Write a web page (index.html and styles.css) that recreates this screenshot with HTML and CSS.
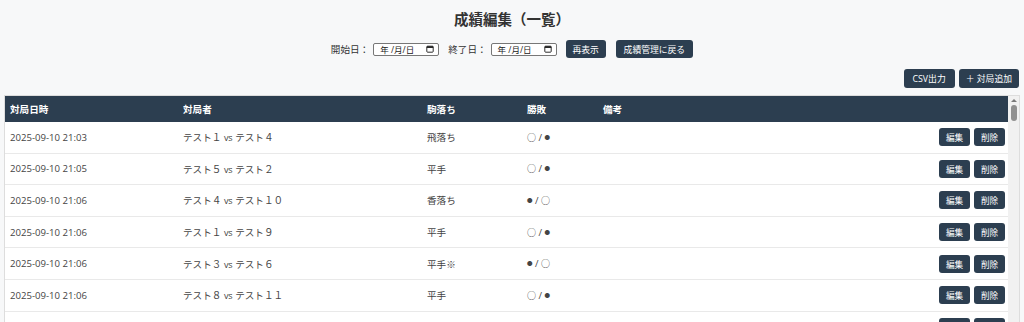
FILE: index.html
```html
<!DOCTYPE html>
<html lang="ja">
<head>
  <meta charset="UTF-8" />
  <meta name="viewport" content="width=device-width, initial-scale=1.0"/>
  <title>成績編集（一覧）</title>
  <link rel="stylesheet" href="styles.css">
</head>
<body>
  <h1 class="title">成績編集（一覧）</h1>

  <div class="filters">
    <label>開始日：</label>
    <span class="date-box"><span>年 /月/日</span><svg class="cal" viewBox="0 0 10 10"><rect x="1" y="1.5" width="8" height="7.5" rx="1" fill="none" stroke="#222" stroke-width="1.2"/><rect x="1" y="1.5" width="8" height="2.2" fill="#222"/></svg></span>
    <label class="gap-left">終了日：</label>
    <span class="date-box"><span>年 /月/日</span><svg class="cal" viewBox="0 0 10 10"><rect x="1" y="1.5" width="8" height="7.5" rx="1" fill="none" stroke="#222" stroke-width="1.2"/><rect x="1" y="1.5" width="8" height="2.2" fill="#222"/></svg></span>
    <button class="btn btn-reload">再表示</button>
    <button class="btn">成績管理に戻る</button>
  </div>

  <div class="toolbar">
    <button class="btn btn-tool btn-csv">CSV出力</button>
    <button class="btn btn-tool">＋ 対局追加</button>
  </div>

  <div class="table-wrap">
    <div class="table-area">
      <table id="tabelaJogos">
        <colgroup>
          <col style="width:173px">
          <col style="width:244px">
          <col style="width:100px">
          <col style="width:76px">
          <col>
          <col style="width:80px">
        </colgroup>
        <thead>
          <tr>
            <th>対局日時</th>
            <th>対局者</th>
            <th>駒落ち</th>
            <th>勝敗</th>
            <th>備考</th>
            <th></th>
          </tr>
        </thead>
        <tbody id="jogosBody"></tbody>
      </table>
    </div>
    <div class="scrollbar">
      <span class="arrow"></span>
      <span class="thumb"></span>
    </div>
  </div>

  <script>
    const jogos = [
      ['2025-09-10 21:03', 'テスト１', 'テスト４', '飛落ち', 'wb'],
      ['2025-09-10 21:05', 'テスト５', 'テスト２', '平手', 'wb'],
      ['2025-09-10 21:06', 'テスト４', 'テスト１０', '香落ち', 'bw'],
      ['2025-09-10 21:06', 'テスト１', 'テスト９', '平手', 'wb'],
      ['2025-09-10 21:06', 'テスト３', 'テスト６', '平手※', 'bw'],
      ['2025-09-10 21:06', 'テスト８', 'テスト１１', '平手', 'wb'],
      ['2025-09-10 21:07', 'テスト２', 'テスト７', '平手', 'wb']
    ];

    function marca(c) {
      return c === 'w' ? '<span class="maru">○</span>' : '<span class="kuro">●</span>';
    }

    const tbody = document.getElementById('jogosBody');
    jogos.forEach((jogo) => {
      const linha = tbody.insertRow();
      linha.insertCell(0).innerText = jogo[0];
      linha.insertCell(1).innerHTML = jogo[1] + ' <span class="vs">vs</span> ' + jogo[2];
      linha.insertCell(2).innerText = jogo[3];
      linha.insertCell(3).innerHTML = marca(jogo[4][0]) + ' / ' + marca(jogo[4][1]);
      linha.insertCell(4).innerText = '';
      const acoes = linha.insertCell(5);
      acoes.className = 'acoes';
      acoes.innerHTML = '<button class="btn btn-sm">編集</button><button class="btn btn-sm">削除</button>';
    });
  </script>
</body>
</html>
```

FILE: styles.css
```css
html, body { height: 100%; overflow: hidden; }
body { margin: 0; padding: 0 4px; background: #f7f8f9; font-family: "Open Sans", "Noto Sans CJK JP", sans-serif; color: #333; }
.title { margin: 9px 0 0; font-size: 14.5px; line-height: 20px; text-align: center; color: #333; font-family: "Noto Sans CJK JP", sans-serif; }
.filters { display: flex; justify-content: center; align-items: center; margin-top: 11px; height: 18px; font-size: 9.6px; color: #333; }
.filters label { margin-right: 4px; }
.filters .gap-left { margin-left: 9px; }
.date-box { display: inline-flex; align-items: center; justify-content: space-between; width: 66px; height: 13px; box-sizing: border-box; padding: 0 4px 0 6px; border: 1px solid #777; border-radius: 2px; background: #fff; font-size: 8.5px; color: #222; }
.cal { width: 8px; height: 8px; }
.btn { background: #2c3e50; color: #fff; border: 0; border-radius: 3px; font-family: "Noto Sans CJK JP", sans-serif; font-size: 8.8px; padding: 0 8px; height: 18px; cursor: pointer; }
.btn-reload { margin-left: 9px; margin-right: 10px; width: 40px; padding: 0; }
.toolbar { display: flex; justify-content: flex-end; gap: 4px; margin-top: 11px; padding-right: 1px; }
.btn-tool { height: 19px; padding: 0 7px; font-family: "Open Sans", "Noto Sans CJK JP", sans-serif; }
.btn-csv { padding: 0 9px; }
.table-wrap { display: flex; margin-top: 7px; height: 240px; border: 1px solid #ddd; border-bottom: 0; background: #fff; }
.table-area { flex: 1; overflow: hidden; }
.scrollbar { width: 11px; background: #f1f1f1; display: flex; flex-direction: column; align-items: center; }
.arrow { margin-top: 3px; width: 0; height: 0; border-left: 3px solid transparent; border-right: 3px solid transparent; border-bottom: 3px solid #7a7a7a; }
.thumb { margin-top: 3px; width: 6px; height: 16px; border-radius: 3px; background: #909090; }
table { width: 100%; border-collapse: collapse; table-layout: fixed; font-size: 9.6px; }
th { background: #2c3e50; color: #fff; text-align: left; font-weight: bold; height: 26px; padding: 0 5px; font-family: "Noto Sans CJK JP", sans-serif; }
td { height: 30.6px; padding: 0 5px; border-bottom: 1px solid #e9e9e9; color: #444; }
.vs { font-size: 9px; }
.maru { font-size: 9px; }
.kuro { font-size: 5.5px; vertical-align: 1px; }
.acoes { text-align: right; padding-right: 3px; white-space: nowrap; }
.btn-sm { width: 31px; height: 18px; padding: 0; margin-left: 4px; font-size: 8.6px; }
```
